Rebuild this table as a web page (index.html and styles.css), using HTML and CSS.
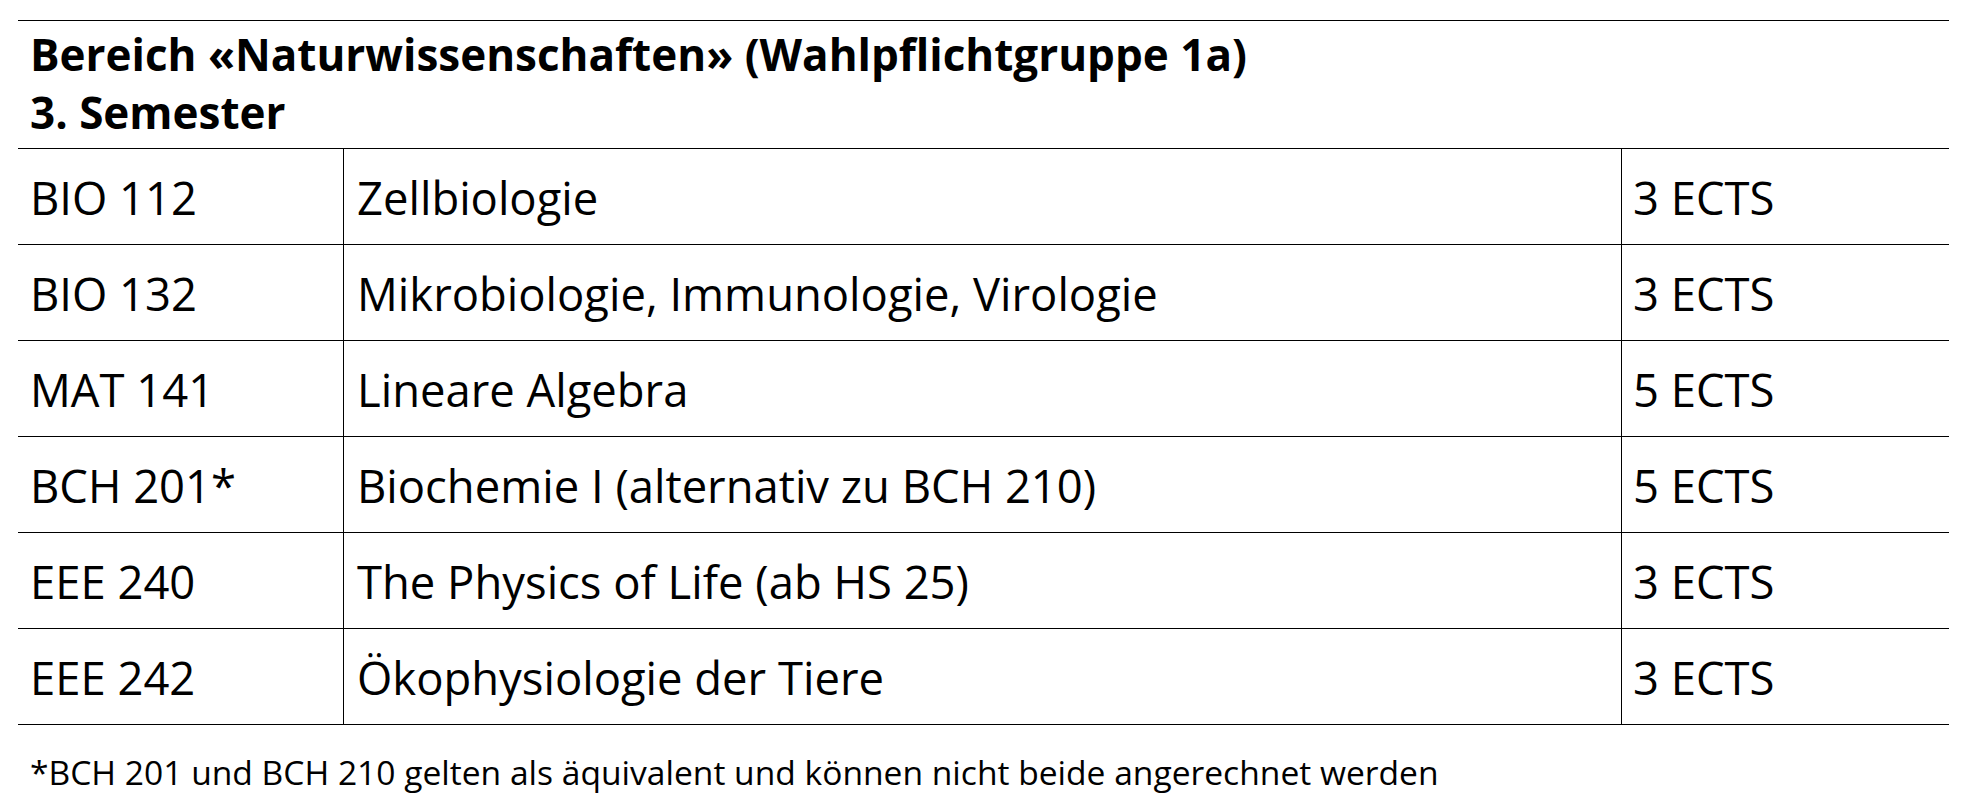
FILE: index.html
```html
<!DOCTYPE html>
<html lang="de">
<head>
<meta charset="utf-8">
<title>Bereich Naturwissenschaften</title>
<link rel="stylesheet" href="styles.css">
</head>
<body>
<main class="page">
  <table class="modules">
    <colgroup>
      <col class="col-code">
      <col class="col-title">
      <col class="col-ects">
    </colgroup>
    <thead>
      <tr>
        <th class="group-head" colspan="3">Bereich «Naturwissenschaften» (Wahlpflichtgruppe 1a)<br>3. Semester</th>
      </tr>
    </thead>
    <tbody>
      <tr><td class="code">BIO 112</td><td class="title">Zellbiologie</td><td class="ects">3 ECTS</td></tr>
      <tr><td class="code">BIO 132</td><td class="title">Mikrobiologie, Immunologie, Virologie</td><td class="ects">3 ECTS</td></tr>
      <tr><td class="code">MAT 141</td><td class="title">Lineare Algebra</td><td class="ects">5 ECTS</td></tr>
      <tr><td class="code">BCH 201*</td><td class="title">Biochemie I (alternativ zu BCH 210)</td><td class="ects">5 ECTS</td></tr>
      <tr><td class="code">EEE 240</td><td class="title">The Physics of Life (ab HS 25)</td><td class="ects">3 ECTS</td></tr>
      <tr><td class="code">EEE 242</td><td class="title">Ökophysiologie der Tiere</td><td class="ects">3 ECTS</td></tr>
    </tbody>
  </table>
  <p class="footnote">*BCH 201 und BCH 210 gelten als äquivalent und können nicht beide angerechnet werden</p>
</main>
</body>
</html>
```
FILE: styles.css
```css
html, body {
  margin: 0;
  padding: 0;
  background: #fff;
}

body {
  font-family: "Open Sans", "Noto Sans", sans-serif;
  color: #000;
}

.page {
  padding: 20px 0 0 18px;
}

.modules {
  width: 1931px;
  table-layout: fixed;
  border-collapse: separate;
  border-spacing: 0;
}

.col-code { width: 326px; }
.col-title { width: 1278px; }
.col-ects { width: 327px; }

.group-head {
  text-align: left;
  font-weight: 700;
  font-size: 44px;
  line-height: 58px;
  padding: 4px 0 7px 12px;
  border-top: 1px solid #000;
  border-bottom: 1px solid #000;
  height: 116px;
  box-sizing: content-box;
}

.modules td {
  font-size: 45.4px;
  line-height: 62px;
  height: 96px;
  padding: 0 0 0 12px;
  box-sizing: border-box;
  vertical-align: middle;
  border-bottom: 1px solid #000;
  white-space: nowrap;
}

.modules td.code,
.modules td.title {
  border-right: 1px solid #000;
}

.modules td.title { padding-left: 13px; }
.modules td.ects { padding-left: 11px; }

.footnote {
  margin: 24px 0 0 12px;
  font-size: 33.6px;
  line-height: 46px;
}
```
